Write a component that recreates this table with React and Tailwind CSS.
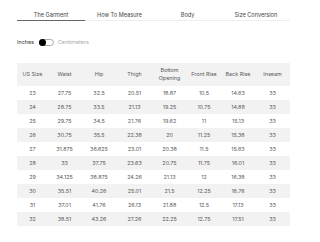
import { useState } from 'react';

const TABS = ['The Garment', 'How To Measure', 'Body', 'Size Conversion'];

const HEADERS = ['US Size', 'Waist', 'Hip', 'Thigh', 'Bottom Opening', 'Front Rise', 'Back Rise', 'Inseam'];

const ROWS = [
  ['23', '27.75', '32.5', '20.51', '18.87', '10.5', '14.63', '33'],
  ['24', '28.75', '33.5', '21.13', '19.25', '10.75', '14.88', '33'],
  ['25', '29.75', '34.5', '21.76', '19.62', '11', '15.13', '33'],
  ['26', '30.75', '35.5', '22.38', '20', '11.25', '15.38', '33'],
  ['27', '31.875', '36.625', '23.01', '20.38', '11.5', '15.63', '33'],
  ['28', '33', '37.75', '23.63', '20.75', '11.75', '16.01', '33'],
  ['29', '34.125', '38.875', '24.26', '21.13', '12', '16.38', '33'],
  ['30', '35.51', '40.26', '25.01', '21.5', '12.25', '16.76', '33'],
  ['31', '37.01', '41.76', '26.13', '21.88', '12.5', '17.13', '33'],
  ['32', '38.51', '43.26', '27.26', '22.25', '12.75', '17.51', '33'],
];

const COLS = 'grid grid-cols-[31px_33px_36px_35px_35px_34px_34px_35px]';

export default function App() {
  const [tab, setTab] = useState(0);
  const [metric, setMetric] = useState(false);

  return (
    <div className="w-[320px] h-[242px] bg-white overflow-hidden font-['Inter',sans-serif] text-[#555]">
      <div className="px-[17px] pt-[11px]">
        {/* Tabs */}
        <div className="w-[273px] grid grid-cols-4 border-b border-[#eeeeee]">
          {TABS.map((t, i) => (
            <button
              key={t}
              onClick={() => setTab(i)}
              className={`h-[10px] text-[5.6px] leading-none text-[#444] -mb-px border-b-[1.5px] ${tab === i ? 'border-[#666]' : 'border-transparent'}`}
            >
              {t}
            </button>
          ))}
        </div>

        {/* Units toggle */}
        <div className="flex items-center mt-[17px] h-[8px] text-[5.4px]">
          <span className="text-[#333]">Inches</span>
          <button
            onClick={() => setMetric(m => !m)}
            className={`ml-[5px] w-[15px] h-[7px] rounded-full border border-[#aaa] bg-white flex items-center ${metric ? 'justify-end' : 'justify-start'}`}
          >
            <span className="w-[7px] h-[7px] -m-px rounded-full bg-black" />
          </button>
          <span className="ml-[4px] text-[#aaa]">Centimeters</span>
        </div>

        {/* Table */}
        <div className="mt-[17px] w-[273px] text-[5.4px] text-[#5a5a5a]">
          <div className={`${COLS} h-[23px] bg-[#f2f2f2] items-center text-center leading-[1.4]`}>
            {HEADERS.map(h => (
              <div key={h} className={h === 'Bottom Opening' ? 'px-[5px]' : ''}>{h}</div>
            ))}
          </div>
          {ROWS.map((r, i) => (
            <div key={r[0]} className={`${COLS} h-[14px] items-center text-center ${i % 2 ? 'bg-[#f2f2f2]' : 'bg-white'}`}>
              {r.map((c, j) => (
                <div key={j}>{c}</div>
              ))}
            </div>
          ))}
        </div>
      </div>
    </div>
  );
}
